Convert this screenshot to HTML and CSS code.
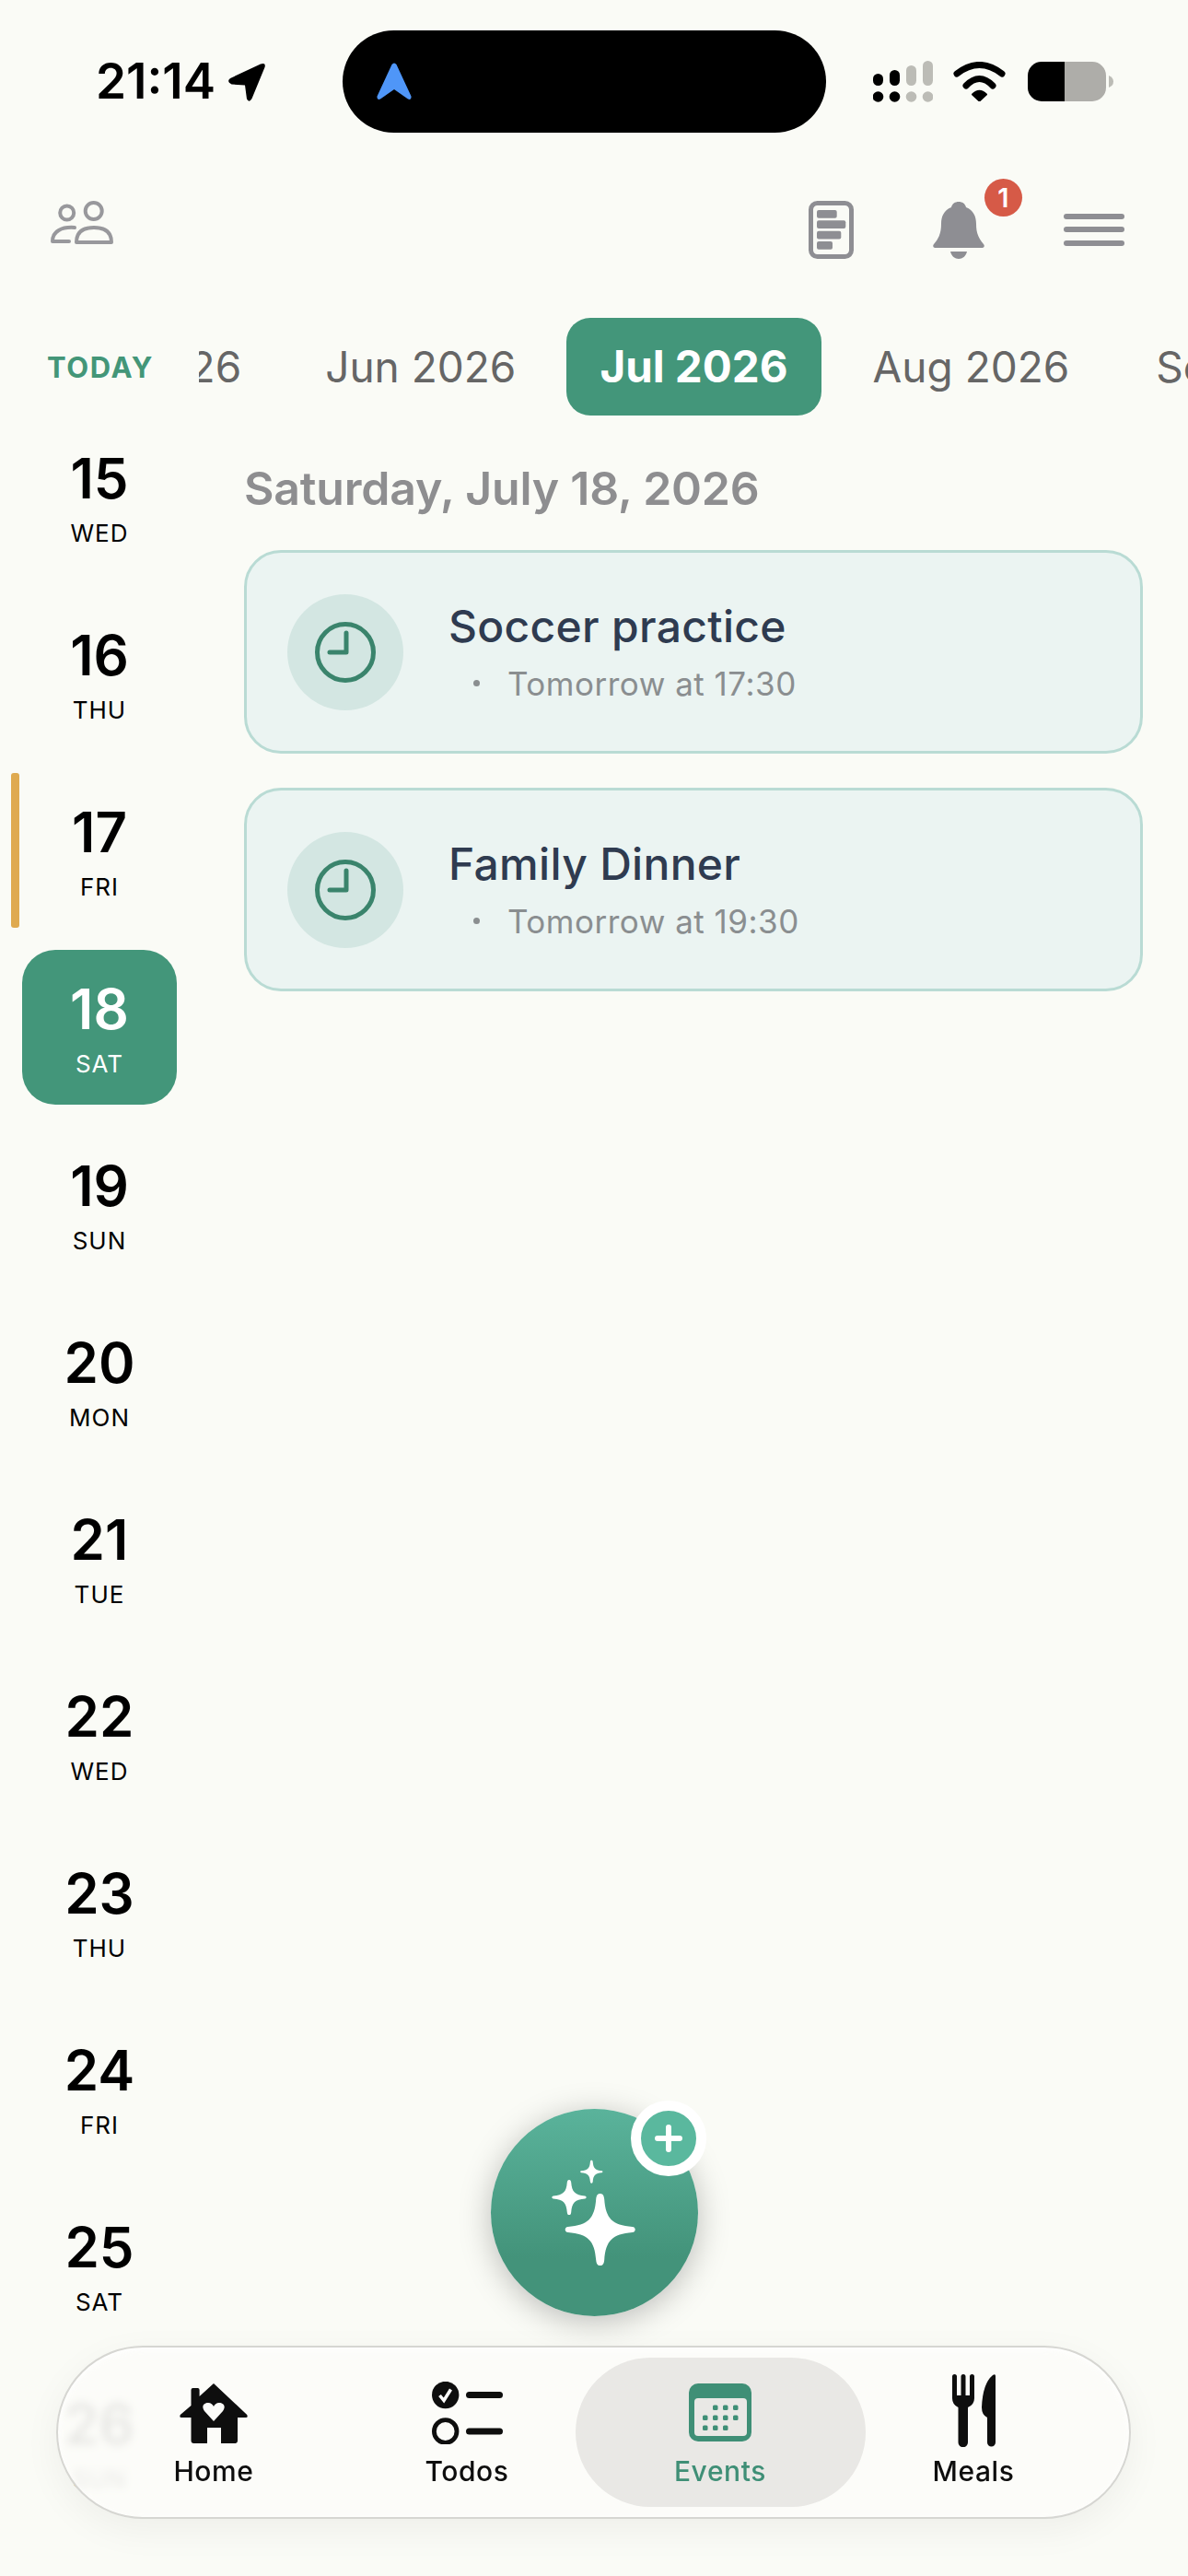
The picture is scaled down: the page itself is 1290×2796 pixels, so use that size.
FILE: index.html
```html
<!DOCTYPE html>
<html lang="en">
<head>
    <meta charset="UTF-8">
    <meta name="viewport" content="width=device-width, initial-scale=1.0">
    <title>Events</title>
    <link rel="stylesheet" href="styles.css">
</head>
<body>
    <!-- Status bar -->
    <div class="status-bar">
        <div class="status-left">
            <span class="status-time">21:14</span>
            <svg class="icon-location" width="42" height="42" viewBox="0 0 42 42"><path d="M36 1.500Q42 -.5 40.500 5L26.500 39Q23.500 44 21 39.500L19 24.500 4.500 23.500Q-1.500 20.500 3 17Z"/></svg>
        </div>
        <div class="island">
            <svg width="38" height="41" viewBox="0 0 38 41"><path d="M16.500 2Q19 -1 21.500 2L37.500 36.500Q38 41 34 39.500L19 29 4 39.500Q0 41 .5 36.500Z" fill="#4f96f8"/></svg>
        </div>
        <div class="status-right">
            <svg width="65" height="45" viewBox="0 0 65 45">
                <rect x="0" y="14" width="11" height="13" rx="5.500"/>
                <rect x="18" y="10" width="11" height="17" rx="5.500"/>
                <rect x="36" y="5" width="11" height="22" rx="5.500" fill="#bcbcb6"/>
                <rect x="54" y="0" width="11" height="27" rx="5.500" fill="#bcbcb6"/>
                <circle cx="5.500" cy="39" r="5.800"/>
                <circle cx="23.500" cy="39" r="5.800"/>
                <circle cx="41.500" cy="39" r="5.800" fill="#bcbcb6"/>
                <circle cx="59.500" cy="39" r="5.800" fill="#bcbcb6"/>
            </svg>
            <svg width="57" height="43" viewBox="0 0 57 43">
                <path d="M4 13Q28.500 -6 53 13" fill="none" stroke="#000" stroke-width="7" stroke-linecap="round"/>
                <path d="M14 26Q28.500 11 43 26" fill="none" stroke="#000" stroke-width="7" stroke-linecap="round"/>
                <path d="M21 35.500Q28.500 28 36 35.500L28.500 42.500Z" stroke="#000" stroke-width="2" stroke-linejoin="round"/>
            </svg>
            <svg class="icon-battery" width="93" height="43" viewBox="0 0 93 43">
                <path d="M15 0H40V43H15A15 15 0 0 1 0 28V15A15 15 0 0 1 15 0Z"/>
                <path d="M40 0H70A15 15 0 0 1 85 15V28A15 15 0 0 1 70 43H40Z" fill="#aeada9"/>
                <path d="M88 15Q93 17 93 21.500Q93 26 88 28Z" fill="#bcbcb6"/>
            </svg>
        </div>
    </div>

    <!-- Top icons -->
    <div class="top-bar">
        <svg width="69" height="63" viewBox="0 0 69 63" fill="none" stroke="#98989c" stroke-width="4" stroke-linejoin="round" stroke-linecap="round">
            <circle cx="18.700" cy="13" r="7.500"/>
            <circle cx="47.700" cy="11" r="9"/>
            <path d="M27 29C13 28 3 33 3 44H21"/>
            <path d="M29 45C29 34 36 29 48 29C60 29 67 34 67 45Z"/>
        </svg>
        <div class="top-actions">
            <svg width="49" height="63" viewBox="0 0 49 63" fill="#8e8e93">
                <rect x="2.500" y="2.500" width="44" height="58" rx="7" fill="none" stroke="#8e8e93" stroke-width="5"/>
                <rect x="9" y="10" width="21.700" height="8.700" rx="2"/>
                <rect x="9" y="21.300" width="31.300" height="8.700" rx="2"/>
                <rect x="9" y="32.700" width="26.300" height="8.700" rx="2"/>
                <rect x="9" y="44" width="17" height="8.700" rx="2"/>
            </svg>
            <div class="bell">
                <svg width="56" height="63" viewBox="0 0 56 63" fill="#8e8e93">
                    <path d="M28 1C32 1 35 3 36 7C44 10 47 17 47 25C47 34 49 40 55 47Q57 50 54 51H2Q-1 50 1 47C7 40 9 34 9 25C9 17 12 10 20 7C21 3 24 1 28 1Z"/>
                    <path d="M19 55H37C36 60 32 63 28 63C24 63 20 60 19 55Z"/>
                </svg>
                <span class="badge">1</span>
            </div>
            <svg width="66" height="63" viewBox="0 0 66 63" fill="#8e8e93">
                <rect x="0" y="14" width="66" height="6" rx="3"/>
                <rect x="0" y="28" width="66" height="6" rx="3"/>
                <rect x="0" y="43" width="66" height="6" rx="3"/>
            </svg>
        </div>
    </div>

    <!-- Month strip -->
    <div class="month-bar">
        <div class="today-btn">TODAY</div>
        <div class="month-scroll">
            <div class="month-track">
                <span class="month month-first">May 2026</span>
                <span class="month">Jun 2026</span>
                <span class="month month-active">Jul 2026</span>
                <span class="month">Aug 2026</span>
                <span class="month">Sep 2026</span>
            </div>
        </div>
    </div>

    <div class="content">
        <!-- Day column -->
        <div class="days">
            <div class="day"><span class="day-num">15</span><span class="day-name">WED</span></div>
            <div class="day"><span class="day-num">16</span><span class="day-name">THU</span></div>
            <div class="day day-today"><span class="day-num">17</span><span class="day-name">FRI</span></div>
            <div class="day day-active"><span class="day-num">18</span><span class="day-name">SAT</span></div>
            <div class="day"><span class="day-num">19</span><span class="day-name">SUN</span></div>
            <div class="day"><span class="day-num">20</span><span class="day-name">MON</span></div>
            <div class="day"><span class="day-num">21</span><span class="day-name">TUE</span></div>
            <div class="day"><span class="day-num">22</span><span class="day-name">WED</span></div>
            <div class="day"><span class="day-num">23</span><span class="day-name">THU</span></div>
            <div class="day"><span class="day-num">24</span><span class="day-name">FRI</span></div>
            <div class="day"><span class="day-num">25</span><span class="day-name">SAT</span></div>
            <div class="day"><span class="day-num">26</span><span class="day-name">SUN</span></div>
        </div>

        <!-- Events for the selected day -->
        <div class="events">
            <h2 class="events-date">Saturday, July 18, 2026</h2>
            <div class="event-card">
                <div class="event-icon">
                    <svg width="68" height="68" viewBox="0 0 68 68" fill="none" stroke="#3a846c" stroke-width="5" stroke-linecap="round" stroke-linejoin="round">
                        <circle cx="34" cy="34" r="30.500"/>
                        <path d="M35 13V34H17"/>
                    </svg>
                </div>
                <div class="event-text">
                    <div class="event-title">Soccer practice</div>
                    <div class="event-time"><span class="event-dot"></span>Tomorrow at 17:30</div>
                </div>
            </div>
            <div class="event-card">
                <div class="event-icon">
                    <svg width="68" height="68" viewBox="0 0 68 68" fill="none" stroke="#3a846c" stroke-width="5" stroke-linecap="round" stroke-linejoin="round">
                        <circle cx="34" cy="34" r="30.500"/>
                        <path d="M35 13V34H17"/>
                    </svg>
                </div>
                <div class="event-text">
                    <div class="event-title">Family Dinner</div>
                    <div class="event-time"><span class="event-dot"></span>Tomorrow at 19:30</div>
                </div>
            </div>
        </div>
    </div>

    <!-- Floating add button -->
    <div class="fab">
        <svg width="225" height="225" viewBox="0 0 225 225" fill="#fff">
            <defs>
                <path id="star" d="M0 -39C3 -39 4 -37 4.500 -33C6 -12 13 -5 35 -3C39 -3 39 3 35 3C13 5 6 12 4.500 33C4 37 3 39 0 39C-3 39 -4 37 -4.500 33C-6 12 -13 5 -35 3C-39 3 -39 -3 -35 -3C-13 -5 -6 -12 -4.500 -33C-4 -37 -3 -39 0 -39Z"/>
            </defs>
            <use href="#star" transform="translate(118.700 131)"/>
            <use href="#star" transform="translate(85 96) scale(.49)"/>
            <use href="#star" transform="translate(109.300 68.300) scale(.32)"/>
        </svg>
        <div class="fab-plus">
            <svg width="30" height="30" viewBox="0 0 30 30" fill="none" stroke="#fff" stroke-width="6" stroke-linecap="round"><path d="M15 3V27M3 15H27"/></svg>
        </div>
    </div>

    <!-- Bottom navigation -->
    <nav class="tab-bar">
        <a class="tab" href="#">
            <svg class="tab-icon icon-home" width="74" height="65" viewBox="0 0 74 65" fill="#0e0e0e" fill-rule="evenodd">
                <path d="M37 0L21.600 14V7Q21.600 5 19.600 5H14.500Q12.500 5 12.500 7V24L.8 34Q-.6 37 2 37H12.500V62Q12.500 65 15.500 65H30V48H45V65H60Q63 65 63 62V37H72Q74.600 37 73.200 34Z M37 41L27 30C23 24 27 21 31 21C34 21 36 23 37 25C38 23 40 21 43 21C47 21 51 24 47 30Z"/>
            </svg>
            <span>Home</span>
        </a>
        <a class="tab" href="#">
            <svg class="tab-icon icon-todos" width="77" height="68" viewBox="0 0 77 68">
                <circle cx="14.700" cy="14.500" r="14.700" fill="#0e0e0e"/>
                <path d="M8.500 15L13 20.500 20.500 8.500" fill="none" stroke="#fff" stroke-width="3.500"/>
                <rect x="37" y="11" width="40" height="7" rx="3.500" fill="#0e0e0e"/>
                <circle cx="14.700" cy="54" r="12.300" fill="none" stroke="#0e0e0e" stroke-width="4.800"/>
                <rect x="37" y="50.500" width="40" height="7" rx="3.500" fill="#0e0e0e"/>
            </svg>
            <span>Todos</span>
        </a>
        <a class="tab tab-active" href="#">
            <svg class="tab-icon icon-events" width="68" height="63" viewBox="0 0 68 63">
                <rect width="68" height="63" rx="10" fill="#3f8f76"/>
                <rect x="6" y="16" width="57" height="41" rx="4" fill="#e9e8e5"/>
                <g fill="#3f8f76">
                    <rect x="26" y="23.500" width="5.500" height="5.500" rx="1.500"/>
                    <rect x="37" y="23.500" width="5.500" height="5.500" rx="1.500"/>
                    <rect x="48" y="23.500" width="5.500" height="5.500" rx="1.500"/>
                    <rect x="15" y="34.500" width="5.500" height="5.500" rx="1.500"/>
                    <rect x="26" y="34.500" width="5.500" height="5.500" rx="1.500"/>
                    <rect x="37" y="34.500" width="5.500" height="5.500" rx="1.500"/>
                    <rect x="48" y="34.500" width="5.500" height="5.500" rx="1.500"/>
                    <rect x="15" y="45.500" width="5.500" height="5.500" rx="1.500"/>
                    <rect x="26" y="45.500" width="5.500" height="5.500" rx="1.500"/>
                    <rect x="37" y="45.500" width="5.500" height="5.500" rx="1.500"/>
                </g>
            </svg>
            <span>Events</span>
        </a>
        <a class="tab" href="#">
            <svg class="tab-icon icon-meals" width="47" height="79" viewBox="0 0 47 79" fill="#0e0e0e">
                <path d="M0 2.500a2.500 2.500 0 0 1 5 0V23H9.500V2.500a2.500 2.500 0 0 1 5 0V23H19V2.500a2.500 2.500 0 0 1 5 0V26Q24 33 17 36V74a5.200 5.200 0 0 1 -10.500 0V36Q0 33 0 26Z"/>
                <path d="M47 2V74a4.500 4.500 0 0 1 -9 0V47Q32 44 32 36Q33 10 44 1Q47 -1 47 2Z"/>
            </svg>
            <span>Meals</span>
        </a>
    </nav>
</body>
</html>
```
FILE: styles.css
```css
/* Page */
body {
    font-family: Inter, "Noto Sans", sans-serif;
    background-color: #fafbf6;
    margin: 0;
    width: 1290px;
    height: 2796px;
    overflow: hidden;
    position: relative;
}

/* Status bar */
.status-bar {
    display: grid;
    grid-template-columns: 372px 525px 1fr;
    align-items: center;
    padding-top: 33px;
}

.status-left {
    display: flex;
    align-items: center;
    padding-left: 104px;
    gap: 13px;
}

.status-time {
    font-size: 53px;
    font-weight: 600;
    line-height: 1;
    color: #000;
}

.island {
    height: 111px;
    background-color: #000;
    border-radius: 56px;
    display: flex;
    align-items: center;
    padding-left: 37px;
}

.status-right {
    display: flex;
    align-items: center;
    padding-left: 51px;
    gap: 22px;
}

.icon-battery {
    margin-left: 2px;
}

/* Top icons */
.top-bar {
    display: flex;
    justify-content: space-between;
    padding: 74px 69px 0 54px;
}

.top-actions {
    display: flex;
    gap: 86px;
}

.bell {
    position: relative;
    height: 63px;
}

.badge {
    position: absolute;
    left: 56px;
    top: -24px;
    width: 41px;
    height: 41px;
    border-radius: 50%;
    background-color: #d65a47;
    color: #fff;
    font-size: 29px;
    font-weight: 600;
    display: flex;
    align-items: center;
    justify-content: center;
}

/* Month strip */
.month-bar {
    display: flex;
    align-items: center;
    margin-top: 64px;
    height: 106px;
}

.today-btn {
    width: 165px;
    padding-left: 51px;
    color: #439678;
    font-size: 31px;
    font-weight: 700;
    letter-spacing: 1.6px;
}

.month-scroll {
    flex: 1;
    overflow: hidden;
}

.month-track {
    display: flex;
    gap: 18px;
    margin-left: -211px;
}

.month {
    flex: none;
    padding: 0 38px;
    height: 106px;
    line-height: 106px;
    font-size: 46px;
    color: #666;
    border-radius: 26px;
}

.month-first {
    padding-right: 35px;
}

.month-active {
    margin-left: -1px;
    padding: 0 36px;
    background-color: #43967a;
    color: #fff;
    font-size: 47.5px;
    font-weight: 700;
}

/* Main area */
.content {
    display: flex;
}

.days {
    display: flex;
    flex-direction: column;
    gap: 24px;
    width: 168px;
    margin-left: 24px;
    padding-top: 4px;
}

.day {
    position: relative;
    height: 168px;
    flex: none;
    display: flex;
    flex-direction: column;
    align-items: center;
    justify-content: center;
    border-radius: 36px;
    color: #000;
}

.day-num {
    font-size: 60px;
    font-weight: 600;
    line-height: 72px;
}

.day-name {
    font-size: 26px;
    font-weight: 400;
    line-height: 32px;
    margin-top: 8px;
    letter-spacing: 1px;
}

.day-today::before {
    content: "";
    position: absolute;
    left: -12px;
    top: 0;
    width: 9px;
    height: 168px;
    border-radius: 3px;
    background-color: #dfaa50;
}

.day-active {
    background-color: #43967a;
    color: #fff;
}

.events {
    flex: 1;
    margin-left: 73px;
    margin-right: 49px;
}

.events-date {
    margin: 49px 0 37px;
    font-size: 50px;
    font-weight: 600;
    line-height: 60px;
    letter-spacing: -0.2px;
    color: #8e8e90;
}

.event-card {
    display: flex;
    align-items: center;
    gap: 49px;
    height: 221px;
    box-sizing: border-box;
    margin-bottom: 37px;
    padding-left: 44px;
    background-color: #ebf4f2;
    border: 3px solid #b9dbd4;
    border-radius: 40px;
}

.event-icon {
    width: 126px;
    height: 126px;
    border-radius: 50%;
    background-color: #d3e6e2;
    display: flex;
    align-items: center;
    justify-content: center;
}

.event-title {
    font-size: 48px;
    font-weight: 500;
    line-height: 56px;
    letter-spacing: 0.3px;
    color: #2f3b50;
}

.event-time {
    display: flex;
    align-items: center;
    margin-top: 12px;
    padding-left: 27px;
    font-size: 35px;
    line-height: 44px;
    letter-spacing: 0.5px;
    color: #8a8e90;
}

.event-dot {
    width: 7px;
    height: 7px;
    border-radius: 50%;
    background-color: #8a8e90;
    margin-right: 30px;
}

/* Floating add button */
.fab {
    position: absolute;
    left: 533px;
    top: 2289px;
    width: 225px;
    height: 225px;
    border-radius: 50%;
    background: linear-gradient(#5ab39b, #43937a 72%);
    box-shadow: 0 6px 34px rgba(0, 0, 0, 0.25);
}

.fab-plus {
    position: absolute;
    right: -9px;
    top: -9px;
    width: 60px;
    height: 60px;
    border: 11px solid #fff;
    border-radius: 50%;
    background-color: #5ab89e;
    display: flex;
    align-items: center;
    justify-content: center;
}

/* Bottom navigation */
.tab-bar {
    position: absolute;
    left: 61px;
    top: 2546px;
    width: 1167px;
    height: 188px;
    box-sizing: border-box;
    padding: 0 31.5px;
    display: flex;
    border-radius: 94px;
    border: 2px solid #d6d6d2;
    background-color: rgba(252, 252, 249, 0.92);
    backdrop-filter: blur(5px);
    box-shadow: 0 12px 40px rgba(0, 0, 0, 0.05), inset 0 2px 6px #fff;
}

.tab {
    position: relative;
    flex: 1;
    display: flex;
    flex-direction: column;
    align-items: center;
    justify-content: flex-end;
    padding-bottom: 32px;
    text-decoration: none;
    color: #0e0e0e;
    font-size: 30px;
    font-weight: 500;
    line-height: 35px;
    letter-spacing: 0.6px;
}

.tab-icon {
    position: relative;
}

/* each glyph sits at its own height above the label */
.icon-home {
    margin-bottom: 13px;
}

.icon-todos {
    margin-bottom: 12px;
}

.icon-events {
    margin-bottom: 15px;
}

.icon-meals {
    margin-bottom: 9px;
}

.tab span {
    position: relative;
}

.tab-active {
    color: #3f8f76;
}

.tab-active::before {
    content: "";
    position: absolute;
    left: -20px;
    right: -20px;
    top: 11px;
    height: 162px;
    border-radius: 81px;
    background-color: #e9e8e5;
}
```
